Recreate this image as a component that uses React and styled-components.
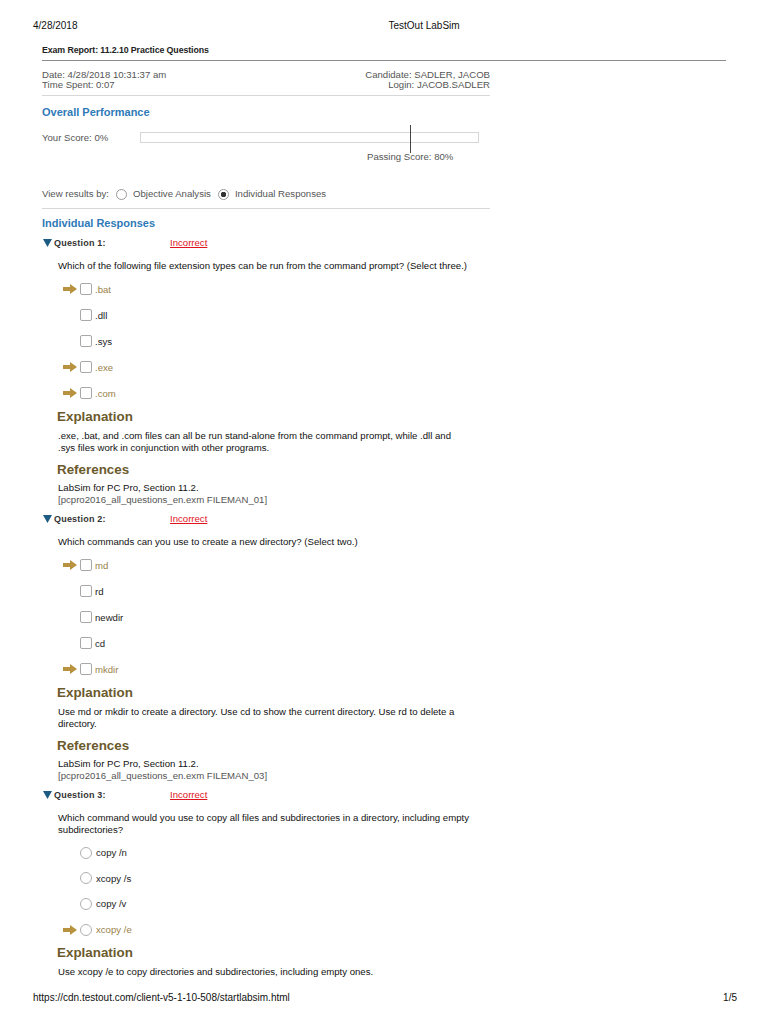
import React from 'react';
import styled, { createGlobalStyle } from 'styled-components';

const GlobalStyle = createGlobalStyle`
    html, body{
        margin:0;
        padding:0;
        background:#fff;
    }
    body{
        font-family:"Liberation Sans", Arial, sans-serif;
        color:#222;
    }
`;

const questions = [
    {
        num: 1,
        prompt: 'Which of the following file extension types can be run from the command prompt? (Select three.)',
        kind: 'check',
        options: [
            { text: '.bat', correct: true },
            { text: '.dll' },
            { text: '.sys' },
            { text: '.exe', correct: true },
            { text: '.com', correct: true },
        ],
        explanation: '.exe, .bat, and .com files can all be run stand-alone from the command prompt, while .dll and .sys files work in conjunction with other programs.',
        ref: 'FILEMAN_01',
    },
    {
        num: 2,
        prompt: 'Which commands can you use to create a new directory? (Select two.)',
        kind: 'check',
        options: [
            { text: 'md', correct: true },
            { text: 'rd' },
            { text: 'newdir' },
            { text: 'cd' },
            { text: 'mkdir', correct: true },
        ],
        explanation: 'Use md or mkdir to create a directory. Use cd to show the current directory. Use rd to delete a directory.',
        ref: 'FILEMAN_03',
    },
    {
        num: 3,
        prompt: 'Which command would you use to copy all files and subdirectories in a directory, including empty subdirectories?',
        kind: 'radio',
        options: [
            { text: 'copy /n' },
            { text: 'xcopy /s' },
            { text: 'copy /v' },
            { text: 'xcopy /e', correct: true },
        ],
        explanation: 'Use xcopy /e to copy directories and subdirectories, including empty ones.',
    },
];

const Arrow = () => (
    <svg width="14" height="10" viewBox="0 0 14 10">
        <path d="M0 3 H7 V0 L14 5 L7 10 V7 H0 Z" fill="#b8923f" />
    </svg>
);

const Triangle = () => (
    <svg width="9" height="8" viewBox="0 0 9 8">
        <path d="M0 0 H9 L4.5 8 Z" fill="#1d5b82" />
    </svg>
);

const App = () => {
    return (
        <Page>
            <GlobalStyle />
            <PrintHeader>
                <span>4/28/2018</span>
                <PrintTitle>TestOut LabSim</PrintTitle>
            </PrintHeader>
            <Report>
                <ReportTitle>Exam Report: 11.2.10 Practice Questions</ReportTitle>
                <Rule />
                <MetaRow>
                    <div>
                        <div>Date: 4/28/2018 10:31:37 am</div>
                        <div>Time Spent: 0:07</div>
                    </div>
                    <MetaRight>
                        <div>Candidate: SADLER, JACOB</div>
                        <div>Login: JACOB.SADLER</div>
                    </MetaRight>
                </MetaRow>
                <Rule short light gap={5} />
                <SectionTitle gap={9}>Overall Performance</SectionTitle>
                <ScoreRow>
                    <ScoreLabel>Your Score: 0%</ScoreLabel>
                    <Bar>
                        <PassMark />
                    </Bar>
                </ScoreRow>
                <PassLabel>Passing Score: 80%</PassLabel>
                <ViewBy>
                    <span>View results by:</span>
                    <RadioDot />
                    <span>Objective Analysis</span>
                    <RadioDot checked />
                    <span>Individual Responses</span>
                </ViewBy>
                <Rule short light gap={7} />
                <SectionTitle gap={7}>Individual Responses</SectionTitle>

                {questions.map((q) => (
                    <Question key={q.num}>
                        <QuestionHead>
                            <Triangle />
                            <QuestionLabel>Question {q.num}:</QuestionLabel>
                            <Status>Incorrect</Status>
                        </QuestionHead>
                        <Prompt>{q.prompt}</Prompt>
                        <Options>
                            {q.options.map((o) => (
                                <Option key={o.text} tight={q.kind === 'radio'}>
                                    <ArrowSlot>{o.correct && <Arrow />}</ArrowSlot>
                                    {q.kind === 'check' ? <Box /> : <Circle />}
                                    <OptionText correct={o.correct}>{o.text}</OptionText>
                                </Option>
                            ))}
                        </Options>
                        <Heading>Explanation</Heading>
                        <BodyText>{q.explanation}</BodyText>
                        {q.ref && (
                            <>
                                <Heading gap={8}>References</Heading>
                                <RefText>
                                    <div>LabSim for PC Pro, Section 11.2.</div>
                                    <RefCode>[pcpro2016_all_questions_en.exm {q.ref}]</RefCode>
                                </RefText>
                            </>
                        )}
                    </Question>
                ))}
            </Report>
            <Footer>
                <span>https://cdn.testout.com/client-v5-1-10-508/startlabsim.html</span>
                <span>1/5</span>
            </Footer>
        </Page>
    );
};

const Page = styled.div`
    width:768px;
    height:1024px;
    display:flex;
    flex-direction:column;
    overflow:hidden;
`;
const PrintHeader = styled.div`
    display:flex;
    padding:20px 0 0 33px;
    font-size:10px;
    line-height:12px;
    color:#111;
`;
const PrintTitle = styled.span`
    margin-left:311px;
`;
const Report = styled.div`
    margin-left:42px;
    width:684px;
    flex:1;
    font-size:9.6px;
`;
const ReportTitle = styled.div`
    margin-top:12px;
    padding-bottom:4px;
    font-size:8.8px;
    line-height:12px;
    font-weight:bold;
    color:#222;
    letter-spacing:-0.1px;
`;
const Rule = styled.div`
    margin-top:${(p) => p.gap || 0}px;
    width:${(p) => (p.short ? '448px' : '684px')};
    border-top:1px solid ${(p) => (p.light ? '#d8d8d8' : '#8c8c8c')};
`;
const MetaRow = styled.div`
    margin-top:9px;
    width:448px;
    display:flex;
    justify-content:space-between;
    line-height:10px;
    color:#555;
`;
const MetaRight = styled.div`
    text-align:right;
`;
const SectionTitle = styled.div`
    margin-top:${(p) => p.gap}px;
    font-size:11px;
    line-height:14px;
    font-weight:bold;
    color:#2f7ab8;
`;
const ScoreRow = styled.div`
    margin-top:13px;
    width:437px;
    display:flex;
    align-items:center;
    height:11px;
    color:#555;
`;
const ScoreLabel = styled.div`
    width:98px;
`;
const Bar = styled.div`
    position:relative;
    flex:1;
    height:9px;
    border:1px solid #d6d6d6;
`;
const PassMark = styled.div`
    position:absolute;
    left:269px;
    top:-8px;
    width:1px;
    height:28px;
    background:#444;
`;
const PassLabel = styled.div`
    margin-top:9px;
    padding-left:325px;
    line-height:10px;
    color:#555;
`;
const ViewBy = styled.div`
    margin-top:25px;
    display:flex;
    align-items:center;
    line-height:14px;
    color:#555;
    span{
        margin-right:7px;
    }
`;
const RadioDot = styled.div`
    width:11px;
    height:11px;
    border:1px solid #9a9a9a;
    border-radius:50%;
    margin:0 6px 0 0;
    box-sizing:border-box;
    background:${(p) => (p.checked ? 'radial-gradient(circle, #333 0 2.5px, #fff 3px)' : '#fff')};
`;
const Question = styled.div`
    margin-top:7px;
`;
const QuestionHead = styled.div`
    display:flex;
    align-items:center;
    padding-left:1px;
    line-height:12px;
    font-size:9px;
`;
const QuestionLabel = styled.span`
    width:116px;
    margin-left:2px;
    font-weight:bold;
    color:#333;
    letter-spacing:0.2px;
`;
const Status = styled.span`
    font-size:9.6px;
    color:#e0141e;
    text-decoration:underline;
`;
const Prompt = styled.div`
    margin-top:11px;
    padding-left:16px;
    width:432px;
    line-height:12px;
    color:#111;
`;
const Options = styled.div`
    margin-top:4px;
`;
const Option = styled.div`
    display:flex;
    align-items:center;
    height:${(p) => (p.tight ? '25.6px' : '26px')};
    padding-left:21px;
`;
const ArrowSlot = styled.div`
    width:17px;
    display:flex;
    align-items:center;
`;
const Box = styled.div`
    width:12px;
    height:12px;
    box-sizing:border-box;
    border:1px solid #a8a8a8;
    border-radius:2px;
    margin-right:3px;
`;
const Circle = styled.div`
    width:12px;
    height:12px;
    box-sizing:border-box;
    border:1px solid #b0b0b0;
    border-radius:50%;
    margin-right:4px;
`;
const OptionText = styled.span`
    color:${(p) => (p.correct ? '#9a7f4a' : '#222')};
`;
const Heading = styled.div`
    margin-top:${(p) => p.gap || 3}px;
    padding-left:15px;
    font-size:13.4px;
    line-height:16px;
    font-weight:bold;
    color:#6b5a2c;
`;
const BodyText = styled.div`
    margin-top:5px;
    padding-left:16px;
    width:408px;
    line-height:12px;
    color:#111;
`;
const RefText = styled.div`
    margin-top:4px;
    padding-left:16px;
    line-height:12px;
    color:#111;
`;
const RefCode = styled.div`
    color:#555;
`;
const Footer = styled.div`
    display:flex;
    justify-content:space-between;
    padding:0 31px 20px 33px;
    font-size:10px;
    line-height:12px;
    color:#111;
`;

export default App;
